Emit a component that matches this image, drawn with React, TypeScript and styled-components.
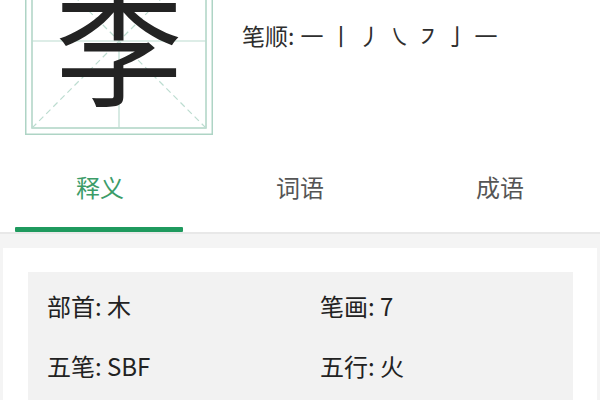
import React from 'react';
import styled, { createGlobalStyle } from 'styled-components';

const GlobalStyle = createGlobalStyle`
  html, body {
    margin: 0;
    padding: 0;
    background: #f4f4f4;
  }
  body {
    font-family: "Noto Sans CJK SC", "Noto Sans", "Liberation Sans", sans-serif;
    color: #222;
  }
`;

const Page = styled.div`
  width: 600px;
  height: 400px;
  overflow: hidden;
  background: #f4f4f4;
  display: flex;
  flex-direction: column;
`;

const Header = styled.header`
  background: #fff;
  display: flex;
  flex-direction: column;
`;

const TopRow = styled.div`
  display: flex;
  align-items: flex-start;
  margin-top: -53px;
  padding-left: 25px;
  height: 203px;
`;

const CharBox = styled.div`
  position: relative;
  width: 188px;
  height: 188px;
  flex-shrink: 0;
  display: flex;
  align-items: center;
  justify-content: center;
`;

const GridLayer = styled.svg`
  position: absolute;
  inset: 0;
`;

const BigChar = styled.span`
  position: relative;
  font-size: 128px;
  line-height: 1;
  color: #232323;
  margin-top: 2px;
`;

const StrokeInfo = styled.div`
  margin-left: 29px;
  margin-top: 72px;
  font-size: 23px;
  line-height: 32px;
  color: #2e2e2e;
  white-space: nowrap;
`;

const Strokes = styled.span`
  letter-spacing: 6px;
  margin-left: 6px;
  font-size: 23px;
`;

const TabBar = styled.nav`
  display: grid;
  grid-template-columns: repeat(3, 1fr);
  height: 82px;
  border-bottom: 2px solid #e8e8e8;
`;

const Tab = styled.div<{ $active?: boolean }>`
  position: relative;
  display: flex;
  justify-content: center;
  padding-top: 20px;
  font-size: 24px;
  line-height: 34px;
  color: ${p => (p.$active ? '#3c9c68' : '#555')};
`;

const Indicator = styled.span`
  position: absolute;
  left: 15px;
  right: 17px;
  bottom: 0;
  height: 5px;
  border-radius: 1px;
  background: #1f9a5e;
`;

const Card = styled.section`
  margin: 14px 3px 0;
  background: #fff;
  padding: 24px 24px 0 25px;
  flex: 1;
`;

const InfoBox = styled.div`
  background: #f2f2f2;
  height: 200px;
  padding: 16px 0 0 19px;
  display: grid;
  grid-template-columns: 273px 1fr;
  grid-auto-rows: 36px;
  row-gap: 24px;
`;

const InfoItem = styled.div`
  font-size: 24px;
  line-height: 36px;
  color: #222;
`;

const CharGrid = () => (
  <GridLayer width="188" height="188" viewBox="0 0 188 188">
    <rect x="0.75" y="0.75" width="186.5" height="186.5" fill="none" stroke="#aed4c5" strokeWidth="1.5" />
    <rect x="7" y="7" width="174" height="174" fill="none" stroke="#aed4c5" strokeWidth="1.5" />
    <line x1="94" y1="7" x2="94" y2="181" stroke="#bcdcd0" strokeWidth="1.2" />
    <line x1="7" y1="94" x2="181" y2="94" stroke="#bcdcd0" strokeWidth="1.2" />
    <line x1="7" y1="7" x2="181" y2="181" stroke="#bcdcd0" strokeWidth="1.2" strokeDasharray="6 4" />
    <line x1="181" y1="7" x2="7" y2="181" stroke="#bcdcd0" strokeWidth="1.2" strokeDasharray="6 4" />
  </GridLayer>
);

export default function App() {
  return (
    <Page>
      <GlobalStyle />
      <Header>
        <TopRow>
          <CharBox>
            <CharGrid />
            <BigChar>李</BigChar>
          </CharBox>
          <StrokeInfo>
            笔顺:<Strokes>一丨丿㇏㇇亅一</Strokes>
          </StrokeInfo>
        </TopRow>
        <TabBar>
          <Tab $active>
            释义
            <Indicator />
          </Tab>
          <Tab>词语</Tab>
          <Tab>成语</Tab>
        </TabBar>
      </Header>
      <Card>
        <InfoBox>
          <InfoItem>部首: 木</InfoItem>
          <InfoItem>笔画: 7</InfoItem>
          <InfoItem>五笔: SBF</InfoItem>
          <InfoItem>五行: 火</InfoItem>
        </InfoBox>
      </Card>
    </Page>
  );
}
